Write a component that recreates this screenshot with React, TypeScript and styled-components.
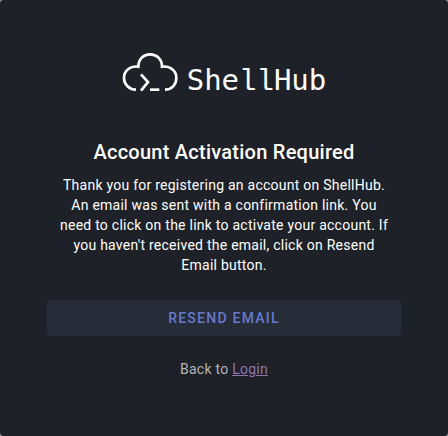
import React from "react";
import styled, { createGlobalStyle } from "styled-components";

const GlobalStyle = createGlobalStyle`
  * { box-sizing: border-box; }
  body {
    margin: 0;
    background: #8f9094;
    font-family: Roboto, "Liberation Sans", sans-serif;
  }
`;

const Card = styled.main`
  display: flex;
  flex-direction: column;
  padding: 52px 47px 57px;
  border-radius: 4px;
  background: #1e2127;
  color: #fff;
  text-align: center;
`;

const Brand = styled.header`
  display: flex;
  justify-content: center;
  gap: 9px;
  height: 40px;
`;

const CloudMark = styled.svg`
  flex: none;
  width: 56px;
  height: 40px;
  fill: none;
  stroke: #fff;
  stroke-width: 8;
`;

const Wordmark = styled.span`
  font-family: "DejaVu Sans Mono", monospace;
  font-size: 29px;
  line-height: 56px;
`;

const SlabLetters = styled.span`
  font-family: "Liberation Mono", monospace;
`;

const Title = styled.h1`
  margin: 44px 0 0;
  font-size: 20px;
  font-weight: 500;
  line-height: 32px;
  letter-spacing: 0.0125em;
`;

const Message = styled.p`
  margin: 7px 0 0;
  padding: 0 12px;
  font-size: 14px;
  line-height: 20px;
  letter-spacing: 0.0179em;
`;

const ResendButton = styled.button`
  height: 36px;
  margin-top: 25px;
  border: 0;
  border-radius: 4px;
  background: #272c39;
  color: #667acc;
  font-family: inherit;
  font-size: 14px;
  font-weight: 500;
  letter-spacing: 0.0893em;
  text-transform: uppercase;
  cursor: pointer;
`;

const BackLine = styled.p`
  margin: 23px 0 0;
  color: #b4b5b7;
  font-size: 14px;
  line-height: 20px;
  letter-spacing: 0.0179em;
`;

const LoginLink = styled.a`
  color: #9175b0;
  text-decoration: underline;
`;

export default function App() {
  return (
    <>
      <GlobalStyle />
      <Card>
        <Brand>
          <CloudMark viewBox="18 21 168 120" aria-hidden="true">
            <path d="M60 134C40 134 24 118 24 99C24 78 42 62 67 65C67 42 83 28 102 28C122 28 138 42 138 65C163 62 181 78 181 99C181 119 167 134 147 134" />
            <path d="M75 88L96 111L75 137" />
            <path d="M102 134H130" />
          </CloudMark>
          <Wordmark>
            She<SlabLetters>ll</SlabLetters>Hub
          </Wordmark>
        </Brand>
        <Title>Account Activation Required</Title>
        <Message>
          Thank you for registering an account on ShellHub. An email was sent
          with a confirmation link. You need to click on the link to activate
          your account. If you haven't received the email, click on Resend Email
          button.
        </Message>
        <ResendButton type="button">Resend Email</ResendButton>
        <BackLine>
          Back to <LoginLink href="#login">Login</LoginLink>
        </BackLine>
      </Card>
    </>
  );
}
